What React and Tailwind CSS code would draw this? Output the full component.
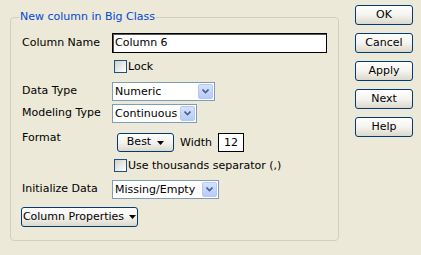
import React from 'react';

const font = { fontFamily: '"DejaVu Sans", Verdana, sans-serif' };

function Triangle() {
    return (
        <svg width="7" height="4" viewBox="0 0 7 4" className="shrink-0">
            <path d="M0 0 H7 L3.5 4 Z" fill="#000" />
        </svg>
    );
}

function XpButton({ children, className = '' }) {
    return (
        <div className={`flex items-center justify-center border border-[#003c74] rounded-[3px] bg-gradient-to-b from-white via-[#f4f3ee] to-[#dcd8cc] text-black ${className}`}>
            {children}
        </div>
    );
}

function Checkbox({ label }) {
    return (
        <div className="flex items-center ml-[2px]">
            <div className="w-[13px] h-[13px] border border-[#1c5180] bg-gradient-to-br from-[#d2d2cb] to-white" />
            <span className="ml-[1px] leading-[13px]">{label}</span>
        </div>
    );
}

function Select({ value, width }) {
    return (
        <div className={`flex items-center h-[19px] border border-[#7f9db9] bg-white ${width}`}>
            <span className="flex-1 pl-[2px] leading-[17px] whitespace-nowrap overflow-hidden">{value}</span>
            <div className="w-[15px] h-[15px] mr-[1px] flex items-center justify-center rounded-[2px] border border-[#b5c8f6] bg-gradient-to-b from-[#d6e2fd] to-[#b7cbf8]">
                <svg width="7" height="5" viewBox="0 0 7 5">
                    <path d="M0.5 0.5 L3.5 3.5 L6.5 0.5" fill="none" stroke="#4d6185" strokeWidth="1.6" />
                </svg>
            </div>
        </div>
    );
}

function Row({ label, children, className = '' }) {
    return (
        <div className={`flex items-center ${className}`}>
            <span className="w-[90px] shrink-0 whitespace-nowrap">{label}</span>
            {children}
        </div>
    );
}

export default function App() {
    return (
        <div className="w-[421px] h-[255px] bg-[#ece9d8] text-[11px] text-black flex pl-[10px] pt-[5px]" style={font}>
            {/* Group box */}
            <div className="relative mt-[12px] w-[329px] h-[224px] border border-[#d0d0bf] rounded-[4px] px-[11px] pt-[15px] flex flex-col">
                <span className="absolute left-[8px] top-[-8px] bg-[#ece9d8] px-[1px] leading-[14px] text-[#0046d5]">
                    New column in Big Class
                </span>

                <Row label="Column Name">
                    <div className="w-[216px] h-[20px] border border-black shadow-[inset_1px_1px_0_#555] bg-white pl-[2px] leading-[18px]">
                        Column 6
                    </div>
                </Row>

                <div className="mt-[7px] pl-[90px]">
                    <Checkbox label="Lock" />
                </div>

                <Row label="Data Type" className="mt-[9px]">
                    <Select value="Numeric" width="w-[103px]" />
                </Row>

                <Row label="Modeling Type" className="mt-[3px]">
                    <Select value="Continuous" width="w-[85px]" />
                </Row>

                <div className="flex items-start mt-[10px]">
                    <span className="w-[90px] shrink-0 leading-[13px] mt-[-2px]">Format</span>
                    <XpButton className="ml-[5px] w-[57px] h-[19px] gap-[6px]">
                        <span>Best</span>
                        <Triangle />
                    </XpButton>
                    <span className="ml-[6px] leading-[19px]">Width</span>
                    <div className="ml-[6px] w-[26px] h-[19px] border border-black bg-white text-center leading-[17px]">12</div>
                </div>

                <div className="mt-[7px] pl-[90px]">
                    <Checkbox label="Use thousands separator (,)" />
                </div>

                <Row label="Initialize Data" className="mt-[8px]">
                    <Select value="Missing/Empty" width="w-[107px]" />
                </Row>

                <XpButton className="mt-[8px] ml-[-1px] w-[117px] h-[20px] gap-[5px]">
                    <span>Column Properties</span>
                    <Triangle />
                </XpButton>
            </div>

            {/* Buttons */}
            <div className="ml-[16px] flex flex-col gap-[8px]">
                {['OK', 'Cancel', 'Apply', 'Next', 'Help'].map(b => (
                    <XpButton key={b} className="w-[58px] h-[20px]">{b}</XpButton>
                ))}
            </div>
        </div>
    );
}
